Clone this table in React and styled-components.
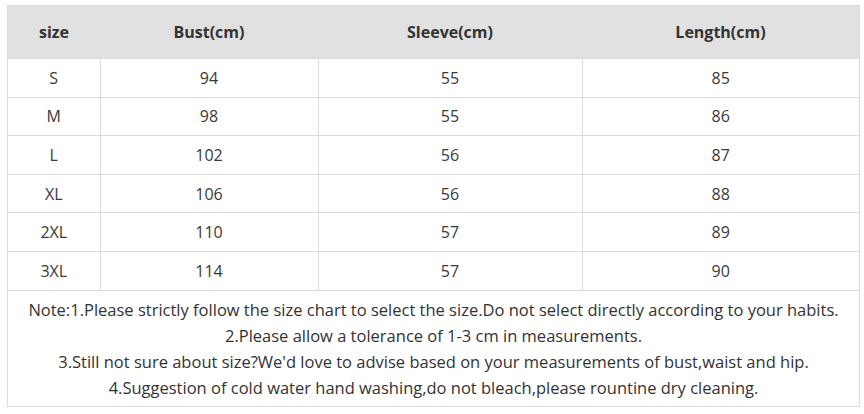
import React from "react";
import styled, { createGlobalStyle } from "styled-components";

const GlobalStyle = createGlobalStyle`
  html, body {
    margin: 0;
    padding: 0;
    background: #ffffff;
  }
  body {
    font-family: "Open Sans", "Noto Sans", sans-serif;
    color: #333333;
  }
`;

const rows = [
  ["S", 94, 55, 85],
  ["M", 98, 55, 86],
  ["L", 102, 56, 87],
  ["XL", 106, 56, 88],
  ["2XL", 110, 57, 89],
  ["3XL", 114, 57, 90],
];

const notes = [
  "Note:1.Please strictly follow the size chart to select the size.Do not select directly according to your habits.",
  "2.Please allow a tolerance of 1-3 cm in measurements.",
  "3.Still not sure about size?We'd love to advise based on your measurements of bust,waist and hip.",
  "4.Suggestion of cold water hand washing,do not bleach,please rountine dry cleaning.",
];

const Page = styled.div`
  padding: 5px 0 0 7px;
`;

const Table = styled.table`
  width: 851px;
  border-collapse: collapse;
  table-layout: fixed;
  border: 1px solid #dcdcdc;
`;

const HeadCell = styled.th`
  width: ${(p) => p.w}px;
  height: 52px;
  padding: 0;
  background: #e1e1e1;
  color: #333333;
  font-size: 16px;
  font-weight: 700;
  text-align: center;
  vertical-align: middle;
`;

const Cell = styled.td`
  height: 37.6px;
  padding: 0;
  border: 1px solid #dcdcdc;
  font-size: 16px;
  color: #3a3a3a;
  text-align: center;
  vertical-align: middle;
`;

const NoteCell = styled.td`
  padding: 6px 0 5px;
  border: 1px solid #dcdcdc;
  text-align: center;
  font-size: 16.5px;
  line-height: 26px;
  color: #333333;
  white-space: nowrap;
`;

const NoteLine = styled.div``;

export default function App() {
  return (
    <Page>
      <GlobalStyle />
      <Table>
        <thead>
          <tr>
            <HeadCell w={92}>size</HeadCell>
            <HeadCell w={218}>Bust(cm)</HeadCell>
            <HeadCell w={264}>Sleeve(cm)</HeadCell>
            <HeadCell w={277}>Length(cm)</HeadCell>
          </tr>
        </thead>
        <tbody>
          {rows.map((r) => (
            <tr key={r[0]}>
              {r.map((v, i) => (
                <Cell key={i}>{v}</Cell>
              ))}
            </tr>
          ))}
          <tr>
            <NoteCell colSpan={4}>
              {notes.map((n) => (
                <NoteLine key={n}>{n}</NoteLine>
              ))}
            </NoteCell>
          </tr>
        </tbody>
      </Table>
    </Page>
  );
}
